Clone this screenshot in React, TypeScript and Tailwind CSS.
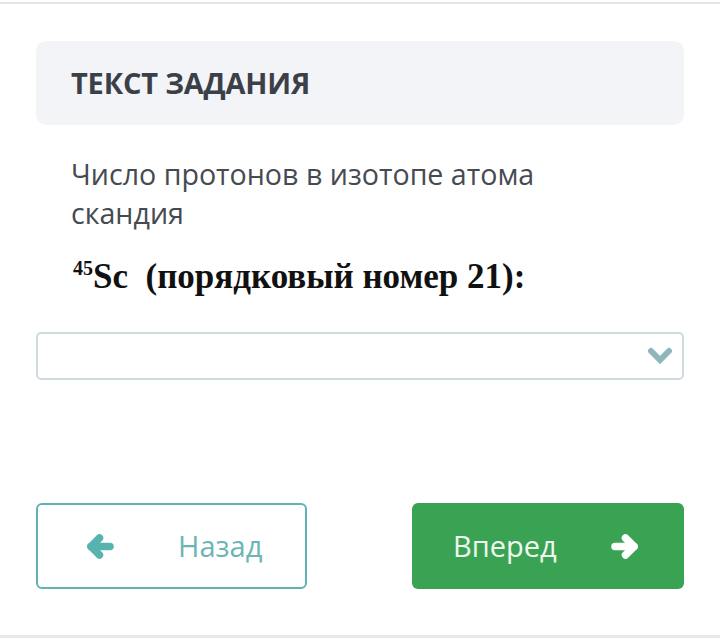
import React from "react";

function Arrow({ dir, color }: { dir: "left" | "right"; color: string }) {
  return (
    <svg width="28" height="27" viewBox="0 0 28 27" className="shrink-0" style={{ transform: dir === "right" ? "scaleX(-1)" : undefined }}>
      <g fill="none" stroke={color} strokeWidth="7.5" strokeLinecap="round" strokeLinejoin="round">
        <path d="M5 13.5 H24" />
        <path d="M13.5 5 L5 13.5 L13.5 22" />
      </g>
    </svg>
  );
}

function Chevron() {
  return (
    <svg width="26" height="20" viewBox="0 0 26 20" className="shrink-0">
      <path d="M4 5 L13 14 L22 5" fill="none" stroke="#8db7bb" strokeWidth="6" strokeLinecap="round" strokeLinejoin="miter" />
    </svg>
  );
}

export default function App() {
  return (
    <div className="w-[720px] h-[639px] bg-white flex flex-col" style={{ fontFamily: '"Open Sans", sans-serif' }}>
      <div className="h-[2px] mt-[2px] bg-[#e4e4e4]" />
      <div className="flex-1 px-[36px] pt-[37px] flex flex-col">
        <div className="h-[84px] rounded-[10px] bg-[#f2f4f7] flex items-center pl-[35px]">
          <span className="text-[29px] font-bold text-[#3b3f47] tracking-[-0.2px]">ТЕКСТ ЗАДАНИЯ</span>
        </div>
        <div className="pl-[35px] pt-[29px] max-w-[570px] text-[28.6px] leading-[39px] text-[#464b52]">
          Число протонов в изотопе атома скандия
        </div>
        <div className="pl-[37px] mt-[25px] h-[40px] text-[#111] font-bold text-[35px] leading-[40px] whitespace-nowrap" style={{ fontFamily: '"Liberation Serif", serif' }}>
          <span className="inline-block text-[20px] leading-none align-[13px]">45</span>Sc&nbsp; (порядковый номер 21):
        </div>
        <div className="mt-[35px] h-[48px] border-2 border-[#cfdcdf] rounded-[5px] flex items-center justify-end pr-[9px]">
          <Chevron />
        </div>
        <div className="mt-[123px] flex justify-between">
          <div className="w-[271px] h-[86px] border-2 border-[#5fb3b2] rounded-[6px] flex items-center pl-[48px]">
            <Arrow dir="left" color="#57b3b0" />
            <span className="ml-[64px] text-[29px] text-[#6db5b4]">Назад</span>
          </div>
          <div className="w-[272px] h-[86px] bg-[#3aa353] rounded-[6px] flex items-center pl-[41px]">
            <span className="text-[29px] text-[#eef8ef]">Вперед</span>
            <span className="ml-[54px] flex"><Arrow dir="right" color="#ffffff" /></span>
          </div>
        </div>
      </div>
      <div className="h-[3px] mb-[1px] bg-[#e8e8e8]" />
    </div>
  );
}
